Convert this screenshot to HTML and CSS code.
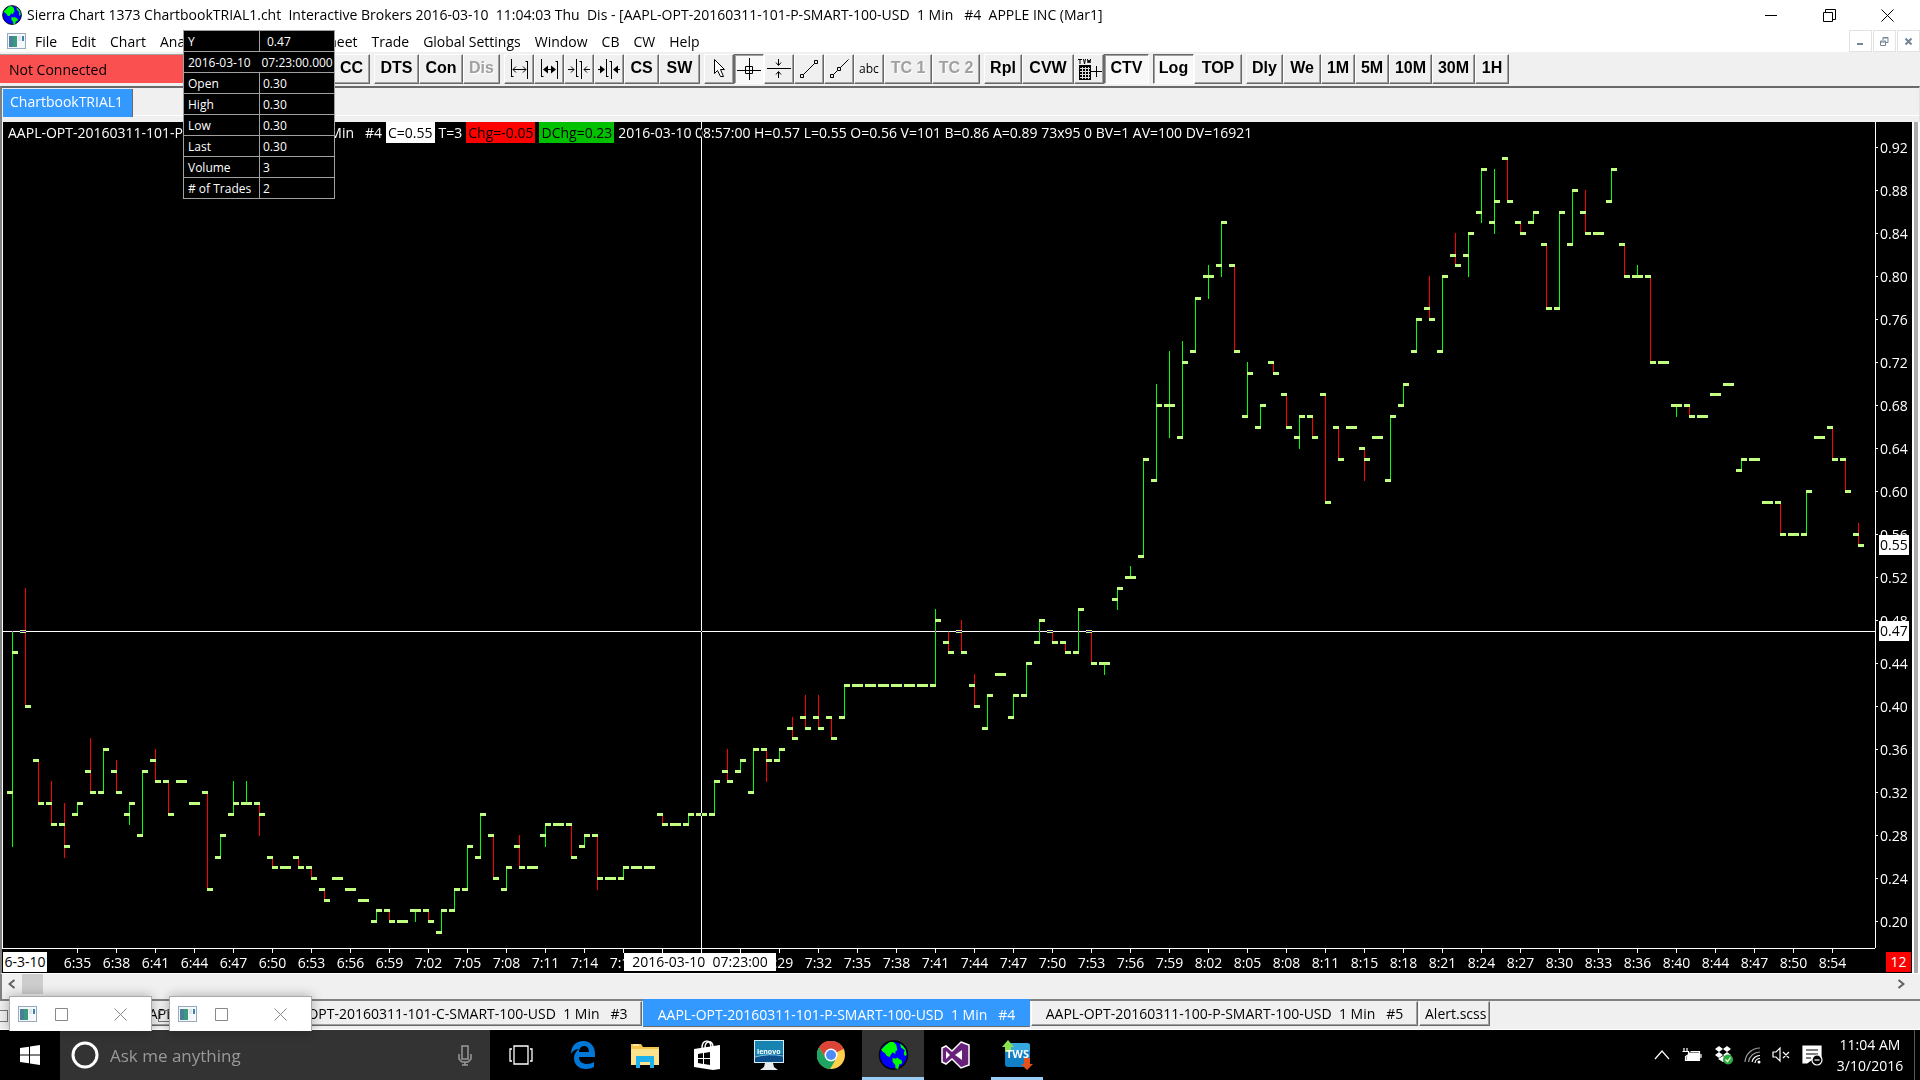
FILE: index.html
```
<!DOCTYPE html>
<html lang="en">
<head>
    <meta charset="UTF-8">
    <meta name="viewport" content="width=device-width, initial-scale=1.0">
    <title>Sierra Chart 1373 ChartbookTRIAL1.cht</title>
    <link rel="stylesheet" href="styles.css">
</head>
<body>
    <!-- shared icons -->
    <svg class="defs" width="0" height="0" aria-hidden="true">
        <symbol id="globe" viewBox="0 0 32 32">
            <circle cx="16" cy="16" r="15" fill="#00f" stroke="#000" stroke-width="1.5"/>
            <path fill="#0f0" d="M5 8l3-3 4-3h4l3 3 1 6-2 1v3l-3-2-2 3-1 2-3-1-2-3-3-2-1-2zM15 19l3 1 2-1 5 3v3l-3 1-1 5-3-1v-3l-3-4zM23 4l3 2 3 4 1 6-2 1-1-3 1-3-4-3z"/>
        </symbol>
        <symbol id="doc" viewBox="0 0 19 16">
            <rect x=".5" y=".5" width="18" height="15" fill="#f4f8fa" stroke="#9ab"/>
            <rect x="2" y="3" width="8" height="11" fill="#3b9a7c"/>
            <path d="M2 3h4v11h-4z" fill="#4a7f9c"/>
            <rect x="11" y="3" width="3" height="5" fill="#dde6ea"/>
            <rect x="15" y="3" width="2" height="5" fill="#3d7fae"/>
        </symbol>
    </svg>

    <header class="titlebar">
        <svg class="app-icon"><use href="#globe"/></svg>
        <h1 class="title">Sierra Chart 1373 ChartbookTRIAL1.cht  Interactive Brokers 2016-03-10  11:04:03 Thu  Dis - [AAPL-OPT-20160311-101-P-SMART-100-USD  1 Min   #4  APPLE INC (Mar1]</h1>
        <div class="window-buttons">
            <button aria-label="Minimize"><svg width="13" height="13"><path d="M0 6.500h12"/></svg></button>
            <button aria-label="Restore"><svg width="13" height="13"><path d="M.5 3.500h9v9h-9zM2.500 3.500v-3h10v10h-3"/></svg></button>
            <button aria-label="Close"><svg width="13" height="13"><path d="M.5.5l12 12M12.500.5l-12 12"/></svg></button>
        </div>
    </header>

    <nav class="menubar">
        <svg class="doc-icon"><use href="#doc"/></svg>
        <button>File</button>
        <button>Edit</button>
        <button>Chart</button>
        <button>Analysis</button>
        <button>Tools</button>
        <button>Spreadsheet</button>
        <button>Trade</button>
        <button>Global Settings</button>
        <button>Window</button>
        <button>CB</button>
        <button>CW</button>
        <button>Help</button>
        <div class="mdi-buttons">
            <button aria-label="Minimize chart"><svg width="9" height="9"><path d="M1 7h6" stroke-width="2"/></svg></button>
            <button aria-label="Restore chart"><svg width="9" height="9"><path d="M.5 4h5v4.500h-5zM.5 5h5M3 3v-2.500h5v5h-2M3 1h5"/></svg></button>
            <button aria-label="Close chart"><svg width="9" height="9"><path d="M1.500 1.500l6 6M7.500 1.500l-6 6" stroke-width="2"/></svg></button>
        </div>
    </nav>

    <div class="toolbar">
        <div class="status">Not Connected</div>
        <div class="group">
            <button class="w37">CC</button>
        </div>
        <div class="group">
            <button class="w45">DTS</button>
            <button class="w44">Con</button>
            <button class="w37" disabled>Dis</button>
        </div>
        <div class="group">
            <button class="icon" aria-label="Increase bar spacing"><svg width="20" height="22"><path d="M2.500 1v18M2.500 18.500h2M18.500 3v18M16.500 3.500h2M4 11.500h13M7 8.500l-3 3 3 3M14 8.500l3 3-3 3"/></svg></button>
            <button class="icon" aria-label="Widen bars"><svg width="20" height="22"><path d="M2.500 1v18M2.500 18.500h2M18.500 3v18M16.500 3.500h2M5 11.500h11"/><path d="M4 11.500l5-4v8zM17 11.500l-5-4v8z" fill="#000" stroke="none"/></svg></button>
            <button class="icon" aria-label="Decrease bar spacing"><svg width="22" height="22"><path d="M8.500 1v18M8.500 18.500h2M13.500 3v18M11.500 3.500h2M0 11.500h6M3 8.500l3 3-3 3M22 11.500h-6M19 8.500l-3 3 3 3"/></svg></button>
            <button class="icon" aria-label="Narrow bars"><svg width="22" height="22"><path d="M8.500 1v18M8.500 18.500h2M13.500 3v18M11.500 3.500h2M0 11.500h4M22 11.500h-4"/><path d="M7 11.500l-5-4v8zM15 11.500l5-4v8z" fill="#000" stroke="none"/></svg></button>
            <button class="w35">CS</button>
            <button class="w41">SW</button>
        </div>
        <div class="group">
            <button class="icon" aria-label="Pointer"><svg width="14" height="22"><path d="M2.500 1.500v14l3-3 3 6h3l-3-7h4z" fill="#fff"/></svg></button>
            <button class="icon pressed" aria-label="Chart values"><svg width="26" height="24"><path d="M13.500 1v22M1 13.500h24M9.500 9.500h7v7h-7z"/></svg></button>
            <button class="icon" aria-label="Horizontal line"><svg width="26" height="22"><path d="M1 10.500h24M12.500 1v6M10 4.500l2.500 3 2.500-3M12.500 20v-6M10 16.500l2.500-3 2.500 3"/></svg></button>
            <button class="icon" aria-label="Line"><svg width="20" height="22"><path d="M1.500 16.500h3v3h-3zM15.500 2.500h3v3h-3zM4.500 16.500l11-11"/></svg></button>
            <button class="icon" aria-label="Ray"><svg width="20" height="22"><path d="M1.500 16.500h3v3h-3zM8.500 9.500h3v3h-3zM4.500 16.500l4-4M11.500 9.500l8-8"/></svg></button>
            <button class="icon plain">abc</button>
            <button class="w48" disabled>TC 1</button>
            <button class="w48" disabled>TC 2</button>
        </div>
        <div class="group">
            <button class="w38">Rpl</button>
            <button class="w52">CVW</button>
            <button class="icon" aria-label="Tool values window"><svg width="25" height="24"><path d="M1 2.500h4M3 2v5M6.500 2l1 5 1-5M10.500 2l.5 4 1-3 1 3 .5-4M19.500 9v11M14 14.500h11"/><path d="M2 8h12v15h-12z" fill="#000" stroke="none"/><path d="M3 11.500h10M3 14.500h10M3 17.500h10M3 20.500h10M5.500 10v12M8.500 10v12M11.500 10v12" stroke="#ddd"/></svg></button>
            <button class="w45 pressed">CTV</button>
        </div>
        <div class="group">
            <button class="w41 pressed">Log</button>
            <button class="w48">TOP</button>
        </div>
        <div class="group">
            <button class="w37">Dly</button>
            <button class="w38">We</button>
            <button class="w34">1M</button>
            <button class="w34">5M</button>
            <button class="w43">10M</button>
            <button class="w43">30M</button>
            <button class="w34">1H</button>
        </div>
    </div>

    <div class="book-tabs">
        <button class="book-tab">ChartbookTRIAL1</button>
    </div>

    <main class="workspace">
        <div class="chart">
            <div class="plot">
                <div class="info">
                    <div class="symbol"><span>AAPL-OPT-20160311-101-P-SMART-100-USD</span><span>1 Min   #4</span></div>
                    <span class="mark white">C=0.55</span>
                    <span>T=3</span>
                    <span class="mark red">Chg=-0.05</span>
                    <span class="mark green">DChg=0.23</span>
                    <span>2016-03-10 08:57:00 H=0.57 L=0.55 O=0.56 V=101 B=0.86 A=0.89 73x95 0 BV=1 AV=100 DV=16921</span>
                </div>
                <svg id="bars" class="bars" role="img" aria-label="AAPL option 1 minute bars"></svg>
            </div>
            <div id="priceAxis" class="price-axis"></div>
            <div id="timeAxis" class="time-axis"></div>
            <div class="corner"><span class="countdown">12</span></div>
        </div>
        <div class="gutter"></div>
    </main>

    <div class="scrollbar">
        <button aria-label="Scroll left"><svg width="8" height="10"><path d="M6.500 1l-5 4 5 4"/></svg></button>
        <div class="thumb"></div>
        <button class="right" aria-label="Scroll right"><svg width="8" height="10"><path d="M1.500 1l5 4-5 4"/></svg></button>
    </div>

    <div class="chart-tabs">
        <button class="first">AAPL</button>
        <button class="wide">AAPL-OPT-20160311-101-C-SMART-100-USD  1 Min   #3</button>
        <button class="wide active">AAPL-OPT-20160311-101-P-SMART-100-USD  1 Min   #4</button>
        <button class="wide">AAPL-OPT-20160311-100-P-SMART-100-USD  1 Min   #5</button>
        <button class="file">Alert.scss</button>
        <span class="ghost left"></span>
        <span class="ghost middle"></span>
        <div class="minimized one">
            <svg class="doc-icon"><use href="#doc"/></svg>
            <button aria-label="Maximize"><svg width="13" height="13"><path d="M.5.5h12v12h-12z"/></svg></button>
            <button aria-label="Close"><svg width="13" height="13"><path d="M.5.5l12 12M12.500.5l-12 12"/></svg></button>
        </div>
        <div class="minimized two">
            <svg class="doc-icon"><use href="#doc"/></svg>
            <button aria-label="Maximize"><svg width="13" height="13"><path d="M.5.5h12v12h-12z"/></svg></button>
            <button aria-label="Close"><svg width="13" height="13"><path d="M.5.5l12 12M12.500.5l-12 12"/></svg></button>
        </div>
    </div>

    <footer class="taskbar">
        <button class="start" aria-label="Start"><svg width="20" height="20" fill="#fff"><path d="M0 3l9-1.300v7.800h-9zM10 1.500l10-1.500v9.500h-10zM0 10.500h9v7.800l-9-1.300zM10 10.500h10v9.500l-10-1.500z"/></svg></button>
        <div class="search">
            <svg width="28" height="28"><circle cx="14" cy="14" r="12" fill="none" stroke="#fff" stroke-width="3"/></svg>
            <input type="text" placeholder="Ask me anything" aria-label="Search">
            <svg width="14" height="21" fill="none" stroke="#999"><rect x="4" y="1" width="6" height="13" stroke-width="1.500"/><path d="M1 9v5l3 3h6l3-3v-5M7 17v3M4 20h6" stroke-width="1.500"/></svg>
        </div>
        <button aria-label="Task view"><svg width="24" height="20" fill="none" stroke="#fff" stroke-width="1.300"><path d="M5 1h14v18h-14zM3 4h-2v12h2M21 4h2v12h-2"/></svg></button>
        <button aria-label="Edge"><svg width="26" height="28"><path fill="#0078d7" d="M1 13C1 5 6 0 13 0c8 0 12 6 12 13v3H9c0 5 4 7 8 7 3 0 5-1 7-2v5c-2 1-5 2-8 2C8 28 4 23 4 17c0-4 2-7 5-9-4 0-7 3-8 5zM9 11h10c0-4-2-6-5-6s-5 3-5 6z"/></svg></button>
        <button aria-label="File Explorer"><svg width="28" height="26"><path d="M0 2h10l2 3h16v17H0z" fill="#f3c64b"/><path d="M0 7h28v16H0z" fill="#fde28d"/><path d="M5 14h18v12h-4v-6H9v6H5z" fill="#1fb0ee"/><path d="M2 3h6" stroke="#fff"/></svg></button>
        <button aria-label="Store"><svg width="26" height="30"><path d="M8 8c0-9 9-9 9-1M11 8c0-8 8-8 8-1" fill="none" stroke="#fff" stroke-width="1.500"/><path d="M0 9l26-4v24l-7 1-19-3z" fill="#fff"/><path d="M4 14l5-1v5H4zM10 13l6-1v6h-6zM4 19h5v5l-5-1zM10 19h6v6l-6-1z"/></svg></button>
        <button aria-label="Lenovo"><svg width="30" height="30"><path d="M0 0h30v23H0z" fill="#d5edf7"/><path d="M1 1h28v14L1 16z" fill="#1683b0"/><path d="M1 16l28-2v8H1z" fill="#0c4f8a"/><path d="M1 17q14-4 28-1" fill="none" stroke="#7cc4e2"/><path d="M11 23h8l1 4 4 3H6l4-3z" fill="#e8ecee"/><text x="3" y="14" class="tiny">lenovo</text></svg></button>
        <button aria-label="Chrome"><svg width="28" height="28" viewBox="0 0 28 28"><circle cx="14" cy="14" r="14" fill="#ffd04b"/><path d="M14 14L2 6.500A14 14 0 0 1 26.500 8z" fill="#db4437"/><path d="M14 8h12.500A14 14 0 0 0 2 6.500l6 10z" fill="#db4437"/><path d="M2 6.500A14 14 0 0 0 13 28l6-10-5 2-6-4z" fill="#1da462"/><circle cx="14" cy="14" r="6.500" fill="#fff"/><circle cx="14" cy="14" r="5" fill="#4c8bf5"/></svg></button>
        <button class="current" aria-label="Sierra Chart"><svg width="31" height="30"><use href="#globe"/></svg></button>
        <button aria-label="Visual Studio"><svg width="29" height="28"><path fill="#68217a" stroke="#fff" stroke-width="1.500" d="M20 1l8 3v20l-8 3-9-9-6 5-4-2V7l4-2 6 5z"/><path fill="#fff" d="M5 10l4 4-4 4zM21 9v10l-7-5z"/></svg></button>
        <button class="open" aria-label="Trader Workstation"><svg width="31" height="30"><rect x="3" y="3" width="25" height="24" rx="3" fill="#1180c4"/><path d="M3 6q0-3 3-3h19q3 0 3 3v5H3z" fill="#35a9e0"/><path d="M6 0l6 7H9v5H3V7H0z" fill="#8be04e"/><path d="M22 18h6v6h3l-6 6-6-6h3z" fill="#e2501c"/><text x="4" y="18" class="tws">TWS</text></svg></button>

        <div class="tray">
            <svg width="16" height="10"><path d="M1 9l7-8 7 8"/></svg>
            <svg width="22" height="16"><path d="M3 1v3M6 1v3M1.500 4.500h6v3l-3 2v4h14v-9h-9M20 7v4"/><path d="M8 6h10v7H6v-3l2-2z" fill="#fff"/></svg>
            <svg width="19" height="20"><path d="M5 1l4 3-4 3-4-3zM13 1l4 3-4 3-4-3zM5 7l4 3-4 3-4-3zM13 7l4 3-4 3-4-3zM4 14l5-3 5 3-5 3z" fill="#fff" stroke="none"/><circle cx="14" cy="14.500" r="5" fill="#2fae3c" stroke="none"/><path d="M11.500 14.500l2 2 3-4"/></svg>
            <svg width="17" height="18"><path d="M1 16A15 15 0 0 1 16 2M4.500 16A11.500 11.500 0 0 1 16 6" stroke="#999"/><path d="M8 16A8 8 0 0 1 16 9.500M11 17A5 5 0 0 1 16 12.500"/><circle cx="15" cy="16" r="1.500" fill="#fff" stroke="none"/></svg>
            <svg width="19" height="16"><path d="M1 5h3l4-4v13l-4-4H1zM11 5l6 6M17 5l-6 6"/></svg>
            <svg width="21" height="21"><path d="M1 1h18v14H9l-4 3H1z" fill="#fff"/><path d="M4 5h12M4 9h12M4 13h5" stroke="#000"/><circle cx="15" cy="15" r="5" fill="#000"/><path d="M12.500 15h5"/></svg>
        </div>
        <div class="clock">
            <span>11:04 AM</span>
            <span>3/10/2016</span>
        </div>
        <div class="show-desktop"></div>
    </footer>

    <table class="values">
        <tr><th>Y</th><td class="indent">0.47</td></tr>
        <tr><th class="date">2016-03-10</th><td class="time">07:23:00.000</td></tr>
        <tr><th>Open</th><td>0.30</td></tr>
        <tr><th>High</th><td>0.30</td></tr>
        <tr><th>Low</th><td>0.30</td></tr>
        <tr><th>Last</th><td>0.30</td></tr>
        <tr><th>Volume</th><td>3</td></tr>
        <tr><th># of Trades</th><td>2</td></tr>
    </table>

    <script src="chart.js"></script>
</body>
</html>
```

FILE: styles.css
```
* {
    box-sizing: border-box;
}

body {
    margin: 0;
    height: 100vh;
    display: flex;
    flex-direction: column;
    overflow: hidden;
    background-color: #f0f0f0;
    color: #000;
    font-family: "Open Sans", "Noto Sans", sans-serif;
    font-size: 14px;
    line-height: 20px;
}

button, input {
    font: inherit;
    color: inherit;
    margin: 0;
    padding: 0;
    border: none;
    background: none;
}

svg {
    display: block;
    flex: none;
}

.defs {
    position: absolute;
}

/* Title bar */
.titlebar {
    display: flex;
    align-items: center;
    height: 30px;
    flex: none;
    padding-right: 4px;
    background-color: #fff;
}

.app-icon {
    width: 20px;
    height: 20px;
    margin: 0 5px 0 2px;
}

.title {
    flex: 1;
    margin: 0;
    font-size: 14px;
    font-weight: normal;
    white-space: pre;
}

.window-buttons {
    display: flex;
}

.window-buttons button {
    width: 58px;
    height: 30px;
    display: flex;
    align-items: center;
    justify-content: center;
}

.window-buttons svg {
    fill: none;
    stroke: #000;
}

/* Menu bar */
.menubar {
    display: flex;
    align-items: center;
    height: 22px;
    flex: none;
    padding-left: 7px;
    background-color: #fff;
}

.doc-icon {
    width: 19px;
    height: 16px;
}

.menubar .doc-icon {
    margin-right: 2px;
}

.menubar > button {
    padding: 1px 7px 0;
}

.mdi-buttons {
    display: flex;
    gap: 1px;
    margin-left: auto;
}

.mdi-buttons button {
    width: 23px;
    height: 22px;
    display: flex;
    align-items: center;
    justify-content: center;
    border: 1px solid #e3e3e3;
}

.mdi-buttons svg {
    fill: none;
    stroke: #768596;
}

/* Toolbar */
.toolbar {
    display: flex;
    gap: 4px;
    height: 34px;
    flex: none;
    padding-top: 2px;
}

.status {
    width: 329px;
    height: 29px;
    padding: 5px 9px;
    background-color: #fa5050;
    border-top: 1px solid #a0a0a0;
}

.group {
    display: flex;
}

.group button {
    height: 30px;
    display: flex;
    align-items: center;
    justify-content: center;
    padding-bottom: 2px;
    border: 1px solid;
    border-color: #fff #696969 #696969 #fff;
    box-shadow: inset -1px -1px 0 #a0a0a0;
    font-family: "Liberation Sans", Arial, sans-serif;
    font-size: 16px;
    font-weight: bold;
}

.group button.icon {
    width: 30px;
    padding-bottom: 0;
}

.group button.plain {
    font-family: "Open Sans", sans-serif;
    font-size: 12px;
    font-weight: normal;
}

.group button.pressed {
    background-color: #f8f8f8;
    border-color: #696969 #fff #fff #696969;
    box-shadow: inset 1px 1px 0 #a0a0a0;
}

.group button:disabled {
    color: #a0a0a0;
    text-shadow: 1px 1px 0 #fff;
}

.group svg {
    fill: none;
    stroke: #000;
}

.w34 { width: 34px; }
.w35 { width: 35px; }
.w37 { width: 37px; }
.w38 { width: 38px; }
.w41 { width: 41px; }
.w43 { width: 43px; }
.w44 { width: 44px; }
.w45 { width: 45px; }
.w48 { width: 48px; }
.w52 { width: 52px; }

/* Chartbook tabs */
.book-tabs {
    height: 36px;
    flex: none;
    padding: 1px 0 0 1px;
    border: solid;
    border-width: 2px 1px 0 2px;
    border-color: #696969 #e3e3e3 #fff #808080;
    background: linear-gradient(#fff, #fff) 0 27px / 100% 1px no-repeat;
}

.book-tab {
    height: 28px;
    padding: 0 9px 3px 7px;
    background-color: #39f;
    color: #fff;
    border-right: 1px solid #696969;
}

/* Chart window */
.workspace {
    flex: 1;
    display: flex;
    min-height: 0;
    border-left: 2px solid #808080;
}

.chart {
    flex: 1;
    min-width: 0;
    display: grid;
    grid-template-columns: 1fr 37px;
    grid-template-rows: 1fr 25px;
    background-color: #000;
    color: #fff;
}

.plot {
    display: grid;
    min-width: 0;
    min-height: 0;
    overflow: hidden;
    border-left: 1px solid #fff;
}

.info,
.bars {
    grid-area: 1 / 1;
}

.info {
    display: flex;
    gap: 4px;
    align-self: start;
    padding-left: 5px;
    line-height: 21px;
    white-space: pre;
}

.symbol {
    display: flex;
    justify-content: space-between;
    width: 374px;
}

.mark {
    padding: 0 2px;
    color: #000;
}

.mark.white { background-color: #fff; }
.mark.red { background-color: #f00; }
.mark.green { background-color: #00c000; }

.bars {
    width: 100%;
    height: 100%;
    shape-rendering: crispEdges;
}

.bar-up { fill: #0f0; }
.bar-down { fill: #f00; }
.bar-tick { fill: #c0ff80; }

.crosshair {
    fill: #fff;
    mix-blend-mode: difference;
}

.price-axis {
    position: relative;
    display: flex;
    flex-direction: column;
    min-height: 0;
    padding-top: 4px;
    overflow: hidden;
    border-left: 1px solid #fff;
}

.price-axis .label {
    display: flex;
    align-items: center;
    gap: 2px;
    height: 43px;
    flex: none;
}

.price-axis .label::before {
    content: "";
    width: 2px;
    height: 1px;
    background-color: #fff;
}

.tag {
    position: absolute;
    background-color: #fff;
    color: #000;
    white-space: pre;
}

.price-axis .tag {
    left: 3px;
    padding: 0 1px;
}

.time-axis {
    position: relative;
    display: flex;
    min-width: 0;
    overflow: hidden;
    padding-left: 56px;
    border-top: 1px solid #fff;
}

.time-axis .label {
    display: flex;
    flex-direction: column;
    align-items: center;
    width: 39px;
    flex: none;
}

.time-axis .label::before {
    content: "";
    width: 1px;
    height: 4px;
    background-color: #fff;
}

.time-axis .session {
    left: 1px;
    top: 3px;
    width: 44px;
    text-align: center;
}

.time-axis .cursor {
    top: 4px;
    width: 152px;
    line-height: 18px;
    text-align: center;
}

.corner {
    display: flex;
    align-items: center;
    justify-content: flex-end;
    padding: 3px 1px 0 0;
}

.countdown {
    width: 25px;
    text-align: center;
    background-color: #f00;
}

.gutter {
    width: 8px;
    border: solid #fff;
    border-width: 0 2px;
    background-color: #ababab;
}

/* Scrollbar */
.scrollbar {
    display: flex;
    align-items: center;
    height: 26px;
    flex: none;
    padding: 0 9px 5px 0;
    border-top: 1px solid #fff;
    border-left: 2px solid #808080;
}

.scrollbar button {
    width: 20px;
    display: flex;
    justify-content: center;
}

.scrollbar .right {
    margin-left: auto;
}

.scrollbar svg {
    fill: none;
    stroke: #606060;
    stroke-width: 2;
}

.thumb {
    width: 21px;
    height: 20px;
    background-color: #cdcdcd;
}

/* Chart tabs */
.chart-tabs {
    position: relative;
    display: flex;
    align-items: flex-start;
    gap: 1px;
    height: 31px;
    flex: none;
    padding-left: 134px;
    border-top: 2px solid #808080;
    border-bottom: 1px solid #fff;
}

.chart-tabs > button {
    height: 25px;
    padding: 0 5px;
    border: 1px solid;
    border-color: #f0f0f0 #696969 #696969 #fff;
    box-shadow: inset -1px -1px 0 #a0a0a0;
    white-space: pre;
}

.chart-tabs > .first {
    width: 120px;
    text-align: left;
}

.chart-tabs > .wide {
    width: 387px;
}

.chart-tabs > .file {
    width: 71px;
}

.chart-tabs > .active {
    height: 28px;
    margin-top: -2px;
    padding-top: 3px;
    background-color: #39f;
    border-color: #39f #39f #696969 #39f;
    box-shadow: none;
    color: #fff;
}

/* outlines of window buttons lying under the minimized windows */
.ghost {
    position: absolute;
    top: 9px;
    width: 12px;
    height: 12px;
    border: 1px solid #777;
}

.ghost.left { left: -4px; }
.ghost.middle { left: 158px; }

.minimized {
    position: absolute;
    top: -5px;
    display: flex;
    align-items: center;
    width: 143px;
    height: 35px;
    padding-left: 8px;
    background-color: #fff;
    border: 1px solid #aaa;
    border-bottom: none;
    box-shadow: 0 0 12px rgba(0, 0, 0, 0.3);
}

.minimized.one { left: 9px; }
.minimized.two { left: 169px; }

.minimized button {
    margin-left: 18px;
}

.minimized button + button {
    margin-left: 46px;
}

.minimized button svg {
    fill: none;
    stroke: #888;
}

/* Taskbar */
.taskbar {
    display: flex;
    align-items: stretch;
    height: 50px;
    flex: none;
    background-color: #000;
    color: #fff;
}

.taskbar > button {
    width: 62px;
    display: flex;
    align-items: center;
    justify-content: center;
}

.taskbar .start {
    width: 60px;
}

.search {
    display: flex;
    align-items: center;
    gap: 11px;
    width: 430px;
    padding: 0 18px 0 11px;
    background-color: #333;
}

.search input {
    flex: 1;
    min-width: 0;
    padding-top: 2px;
    font-size: 17px;
    outline: none;
}

.search input::placeholder {
    color: #999;
    opacity: 1;
}

.taskbar .current {
    background-color: #333;
    border-bottom: 3px solid #99cdf5;
    padding-top: 3px;
}

.taskbar .open {
    margin: 0 5px;
    width: 52px;
    border-bottom: 3px solid #99cdf5;
    padding-top: 3px;
}

.tiny,
.tws {
    fill: #fff;
    font-size: 7px;
    font-weight: bold;
}

.tws {
    font-size: 11px;
}

.tray {
    display: flex;
    align-items: center;
    gap: 11px;
    margin-left: auto;
    padding-right: 11px;
}

.tray svg {
    fill: none;
    stroke: #fff;
    stroke-width: 1.2;
}

.clock {
    display: flex;
    flex-direction: column;
    justify-content: center;
    align-items: center;
    width: 72px;
    line-height: 21px;
}

.show-desktop {
    width: 6px;
    margin-left: 8px;
    border-left: 1px solid #555;
}

/* Values window floating over the chart */
.values {
    position: absolute;
    left: 183px;
    top: 30px;
    width: 152px;
    border-collapse: collapse;
    table-layout: fixed;
    background-color: #000;
    color: #fff;
    border: 1px solid #fff;
    border-color: #a0a0a0 #fff #fff #a0a0a0;
    font-size: 12px;
    line-height: 19px;
}

.values th,
.values td {
    height: 21px;
    padding: 1px 0 0 3px;
    border: 1px solid #a0a0a0;
    font-weight: normal;
    text-align: left;
    white-space: nowrap;
}

.values th {
    width: 76px;
    padding-left: 4px;
}

.values .indent {
    padding-left: 7px;
}

.values .date {
    border-right: none;
}

.values .time {
    border-left: none;
    padding-left: 2px;
}
```

FILE: chart.js
```
// Bars in cents: [open, high, low, close]
const bars = [
    [32, 47, 27, 45], [47, 51, 40, 40], [35, 35, 31, 31], [31, 33, 29, 29], [29, 31, 26, 27],
    [30, 31, 30, 31], [34, 37, 32, 32], [32, 36, 32, 36], [34, 35, 32, 32], [30, 31, 29, 31],
    [28, 34, 28, 34], [35, 36, 33, 33], [33, 33, 30, 30], [33, 33, 33, 33], [31, 31, 31, 31],
    [32, 32, 23, 23], [26, 28, 26, 28], [30, 33, 30, 31], [31, 33, 31, 31], [31, 31, 28, 30],
    [26, 26, 25, 25], [25, 25, 25, 25], [26, 26, 25, 25], [25, 25, 24, 24], [23, 23, 22, 22],
    [24, 24, 24, 24], [23, 23, 23, 23], [22, 22, 22, 22], [20, 21, 20, 21], [21, 21, 20, 20],
    [20, 20, 20, 20], [21, 21, 20, 21], [21, 21, 20, 20], [19, 21, 19, 21], [21, 23, 21, 23],
    [23, 27, 23, 27], [26, 30, 26, 30], [28, 28, 24, 24], [23, 25, 23, 25], [27, 28, 25, 25],
    [25, 25, 25, 25], [28, 29, 27, 29], [29, 29, 29, 29], [29, 29, 26, 26], [27, 28, 27, 28],
    [28, 28, 23, 24], [24, 24, 24, 24], [24, 25, 24, 25], [25, 25, 25, 25], [25, 25, 25, 25],
    [30, 30, 29, 29], [29, 29, 29, 29], [29, 30, 29, 30], [30, 30, 30, 30], [30, 33, 30, 33],
    [34, 36, 33, 33], [34, 35, 34, 35], [32, 36, 32, 36], [36, 36, 33, 35], [35, 36, 35, 36],
    [38, 39, 37, 37], [39, 41, 38, 38], [39, 41, 38, 38], [39, 39, 37, 37], [39, 42, 39, 42],
    [42, 42, 42, 42], [42, 42, 42, 42], [42, 42, 42, 42], [42, 42, 42, 42], [42, 42, 42, 42],
    [42, 42, 42, 42], [42, 49, 42, 48], [46, 47, 45, 45], [47, 48, 45, 45], [42, 43, 40, 40],
    [38, 41, 38, 41], [43, 43, 43, 43], [39, 41, 39, 41], [41, 44, 41, 44], [46, 48, 46, 48],
    [47, 47, 46, 46], [46, 46, 45, 45], [45, 49, 45, 49], [47, 47, 44, 44], [44, 44, 43, 44],
    [50, 51, 49, 51], [52, 53, 52, 52], [54, 63, 54, 63], [61, 70, 61, 68], [68, 73, 65, 68],
    [65, 74, 65, 72], [73, 78, 73, 78], [80, 81, 78, 80], [81, 85, 80, 85], [81, 81, 73, 73],
    [67, 72, 67, 71], [66, 68, 66, 68], [72, 72, 71, 71], [69, 69, 66, 66], [65, 67, 64, 67],
    [67, 67, 65, 65], [69, 69, 59, 59], [66, 66, 63, 63], [66, 66, 66, 66], [64, 64, 61, 63],
    [65, 65, 65, 65], [61, 67, 61, 67], [68, 70, 68, 70], [73, 76, 73, 76], [77, 80, 76, 76],
    [73, 80, 73, 80], [82, 84, 81, 81], [82, 84, 80, 84], [86, 90, 85, 90], [85, 90, 84, 87],
    [91, 91, 87, 87], [85, 85, 84, 84], [85, 86, 85, 86], [83, 83, 77, 77], [77, 86, 77, 86],
    [83, 88, 83, 88], [86, 88, 84, 84], [84, 84, 84, 84], [87, 90, 87, 90], [83, 83, 80, 80],
    [80, 81, 80, 80], [80, 80, 72, 72], [72, 72, 72, 72], [68, 68, 67, 68], [68, 68, 67, 67],
    [67, 67, 67, 67], [69, 69, 69, 69], [70, 70, 70, 70], [62, 63, 62, 63], [63, 63, 63, 63],
    [59, 59, 59, 59], [59, 59, 56, 56], [56, 56, 56, 56], [56, 60, 56, 60], [65, 65, 65, 65],
    [66, 66, 63, 63], [63, 63, 60, 60], [56, 57, 55, 55]
];

// The labels under the cursor's date box are left blank
const times = ('6:35 6:38 6:41 6:44 6:47 6:50 6:53 6:56 6:59 7:02 7:05 7:08 7:11 7:14 7:17 - ' +
    '- - 7:29 7:32 7:35 7:38 7:41 7:44 7:47 7:50 7:53 7:56 7:59 8:02 8:05 8:08 8:11 8:15 ' +
    '8:18 8:21 8:24 8:27 8:30 8:33 8:36 8:40 8:44 8:47 8:50 8:54').split(' ');

const barSpacing = 13;
const cursorBar = 53;
const cursorPrice = 47;

const barX = i => 9 + i * barSpacing;
const priceY = p => Math.round(25 + (92 - p) * 10.75);
const format = p => (p / 100).toFixed(2);

const svg = document.getElementById('bars');

function rect(x, y, width, height, className) {
    const el = document.createElementNS('http://www.w3.org/2000/svg', 'rect');
    el.setAttribute('x', x);
    el.setAttribute('y', y);
    el.setAttribute('width', width);
    el.setAttribute('height', height);
    el.setAttribute('class', className);
    svg.appendChild(el);
}

bars.forEach(([open, high, low, close], i) => {
    const x = barX(i);
    if (high > low) {
        rect(x, priceY(high), 1, priceY(low) - priceY(high) + 1, close >= open ? 'bar-up' : 'bar-down');
    }
    rect(x - 5, priceY(open) - 1, 6, 3, 'bar-tick');
    rect(x, priceY(close) - 1, 6, 3, 'bar-tick');
});

// Crosshair
rect(0, priceY(cursorPrice), '100%', 1, 'crosshair');
rect(barX(cursorBar), 0, 1, '100%', 'crosshair');

// Price axis
let prices = '';
for (let p = 92; p >= 20; p -= 4) {
    prices += `<span class="label">${format(p)}</span>`;
}
[55, cursorPrice].forEach(p => {
    prices += `<span class="tag" style="top: ${priceY(p) - 10}px">${format(p)}</span>`;
});
document.getElementById('priceAxis').innerHTML = prices;

// Time axis
document.getElementById('timeAxis').innerHTML =
    times.map(t => `<span class="label">${t === '-' ? '' : t}</span>`).join('') +
    '<span class="tag session">6-3-10</span>' +
    `<span class="tag cursor" style="left: ${barX(cursorBar) - 76}px">2016-03-10  07:23:00</span>`;
```
